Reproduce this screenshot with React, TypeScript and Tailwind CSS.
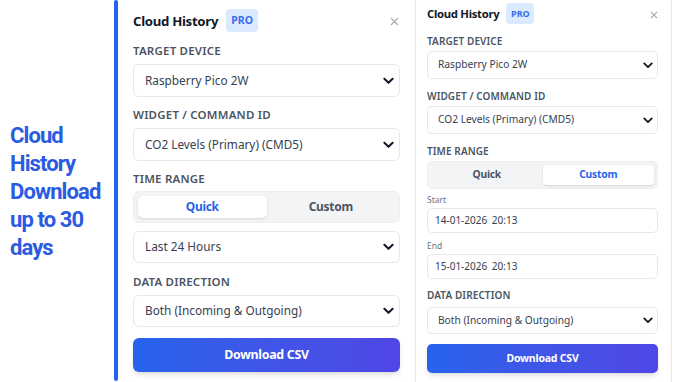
import React from "react";

const Chevron = ({ w, h, sw }: { w: number; h: number; sw: number }) => (
  <svg width={w} height={h} viewBox="0 0 12 8" fill="none">
    <path d="M1.5 1.5 L6 6 L10.5 1.5" stroke="#111827" strokeWidth={sw} strokeLinecap="round" strokeLinejoin="round" />
  </svg>
);

const XIcon = ({ s }: { s: number }) => (
  <svg width={s} height={s} viewBox="0 0 10 10" fill="none">
    <path d="M1.5 1.5 L8.5 8.5 M8.5 1.5 L1.5 8.5" stroke="#9ca3af" strokeWidth={1.3} strokeLinecap="round" />
  </svg>
);

export default function App() {
  const font = { fontFamily: '"Noto Sans", "Open Sans", sans-serif' };
  return (
    <div className="w-[680px] h-[382px] bg-white flex overflow-hidden" style={font}>
      {/* Left caption */}
      <div className="w-[114px] shrink-0 pl-[10px] flex items-center">
        <div
          className="text-[#2b5be3] font-bold text-[22px] leading-[28px] tracking-[-0.9px] pt-[2px]"
          style={{ fontFamily: 'Roboto, "Liberation Sans", sans-serif' }}
        >
          Cloud
          <br />
          History
          <br />
          Download
          <br />
          up to 30
          <br />
          days
        </div>
      </div>
      {/* Blue bar */}
      <div className="w-[4px] shrink-0 h-[381px] bg-[#2563eb] rounded-full" />

      {/* Large panel */}
      <div className="w-[297px] shrink-0 pl-[15px] pr-[15px] pt-[9px] flex flex-col">
        <div className="h-[23px] flex items-center justify-between">
          <div className="flex items-center">
            <span className="pt-[3px] text-[13.2px] font-bold tracking-[-0.3px] text-[#111827]">Cloud History</span>
            <span className="ml-[8px] w-[32px] h-[23px] rounded-[4px] bg-[#dbeafe] text-[#3b6cf0] text-[10.5px] font-bold flex items-center justify-center">
              PRO
            </span>
          </div>
          <div className="mr-[1px] pt-[2px]">
            <XIcon s={9} />
          </div>
        </div>

        <div className="mt-[11px] h-[16px] leading-[16px] text-[11.5px] font-semibold tracking-[0.2px] text-[#4b5563]">TARGET DEVICE</div>
        <div className="mt-[5px] h-[33px] border border-[#e5e7eb] rounded-[6px] flex items-center justify-between pl-[11px] pr-[5px] text-[11.8px] text-[#374151]">
          <span>Raspberry Pico 2W</span>
          <Chevron w={11} h={8} sw={2.2} />
        </div>

        <div className="mt-[10px] h-[16px] leading-[16px] text-[11.5px] font-semibold tracking-[0.2px] text-[#4b5563]">WIDGET / COMMAND ID</div>
        <div className="mt-[5px] h-[33px] border border-[#e5e7eb] rounded-[6px] flex items-center justify-between pl-[11px] pr-[5px] text-[11.8px] text-[#374151]">
          <span>CO2 Levels (Primary) (CMD5)</span>
          <Chevron w={11} h={8} sw={2.2} />
        </div>

        <div className="mt-[10px] h-[16px] leading-[16px] text-[11.5px] font-semibold tracking-[0.2px] text-[#4b5563]">TIME RANGE</div>
        <div className="mt-[4px] h-[32px] bg-[#f3f4f6] rounded-[6px] border border-[#eceef1] p-[4px] flex">
          <div className="flex-1 bg-white rounded-[5px] shadow-sm flex items-center justify-center text-[12px] tracking-[-0.3px] font-bold text-[#2563eb]">Quick</div>
          <div className="flex-1 flex items-center justify-center text-[12px] tracking-[-0.3px] font-bold text-[#4b5563]">Custom</div>
        </div>

        <div className="mt-[8px] h-[32px] border border-[#e5e7eb] rounded-[6px] flex items-center justify-between pl-[11px] pr-[5px] text-[11.8px] text-[#374151]">
          <span>Last 24 Hours</span>
          <Chevron w={11} h={8} sw={2.2} />
        </div>

        <div className="mt-[11px] h-[16px] leading-[16px] text-[11.5px] font-semibold tracking-[0.2px] text-[#4b5563]">DATA DIRECTION</div>
        <div className="mt-[5px] h-[32px] border border-[#e5e7eb] rounded-[6px] flex items-center justify-between pl-[11px] pr-[5px] text-[11.8px] text-[#374151]">
          <span>Both (Incoming &amp; Outgoing)</span>
          <Chevron w={11} h={8} sw={2.2} />
        </div>

        <div className="mt-[11px] h-[34px] rounded-[6px] bg-gradient-to-r from-[#2563eb] to-[#4f46e5] shadow-md flex items-center justify-center text-white text-[12.4px] tracking-[-0.3px] font-bold">
          Download CSV
        </div>
      </div>

      {/* Small panel */}
      <div className="w-[257px] shrink-0 h-full border-l border-r border-[#e5e7eb] pl-[11px] pr-[13px] pt-[3px] flex flex-col">
        <div className="h-[21px] flex items-center justify-between">
          <div className="flex items-center">
            <span className="pt-[2px] text-[11.3px] font-bold tracking-[-0.3px] text-[#111827]">Cloud History</span>
            <span className="ml-[7px] w-[28px] h-[21px] rounded-[4px] bg-[#dbeafe] text-[#3b6cf0] text-[9px] font-bold flex items-center justify-center">
              PRO
            </span>
          </div>
          <div className="mr-[0px] pt-[2px]">
            <XIcon s={8} />
          </div>
        </div>

        <div className="mt-[10px] h-[14px] leading-[14px] text-[10px] font-semibold tracking-[0.1px] text-[#4b5563]">TARGET DEVICE</div>
        <div className="mt-[3px] h-[28px] border border-[#e5e7eb] rounded-[5px] flex items-center justify-between pl-[10px] pr-[4px] text-[10.2px] text-[#374151]">
          <span>Raspberry Pico 2W</span>
          <Chevron w={10} h={7} sw={2.2} />
        </div>

        <div className="mt-[10px] h-[14px] leading-[14px] text-[10px] font-semibold tracking-[0.1px] text-[#4b5563]">WIDGET / COMMAND ID</div>
        <div className="mt-[3px] h-[28px] border border-[#e5e7eb] rounded-[5px] flex items-center justify-between pl-[10px] pr-[4px] text-[10.2px] text-[#374151]">
          <span>CO2 Levels (Primary) (CMD5)</span>
          <Chevron w={10} h={7} sw={2.2} />
        </div>

        <div className="mt-[10px] h-[14px] leading-[14px] text-[10px] font-semibold tracking-[0.1px] text-[#4b5563]">TIME RANGE</div>
        <div className="mt-[3px] h-[28px] bg-[#f3f4f6] rounded-[5px] border border-[#eceef1] p-[3px] flex">
          <div className="flex-1 flex items-center justify-center text-[10.3px] tracking-[-0.2px] font-bold text-[#4b5563]">Quick</div>
          <div className="flex-1 bg-white rounded-[4px] shadow-sm flex items-center justify-center text-[10.3px] tracking-[-0.2px] font-bold text-[#2563eb]">Custom</div>
        </div>

        <div className="mt-[5px] h-[12px] leading-[12px] text-[8.5px] text-[#6b7280]">Start</div>
        <div className="mt-[2px] h-[25px] border border-[#e5e7eb] rounded-[5px] flex items-center pl-[7px] text-[10px] text-[#374151]">
          <span style={{ wordSpacing: "2px" }}>14-01-2026 20:13</span>
        </div>

        <div className="mt-[7px] h-[12px] leading-[12px] text-[8.5px] text-[#6b7280]">End</div>
        <div className="mt-[2px] h-[25px] border border-[#e5e7eb] rounded-[5px] flex items-center pl-[7px] text-[10px] text-[#374151]">
          <span style={{ wordSpacing: "2px" }}>15-01-2026 20:13</span>
        </div>

        <div className="mt-[9px] h-[14px] leading-[14px] text-[10px] font-semibold tracking-[0.1px] text-[#4b5563]">DATA DIRECTION</div>
        <div className="mt-[5px] h-[27px] border border-[#e5e7eb] rounded-[5px] flex items-center justify-between pl-[10px] pr-[4px] text-[10.2px] text-[#374151]">
          <span>Both (Incoming &amp; Outgoing)</span>
          <Chevron w={10} h={7} sw={2.2} />
        </div>

        <div className="mt-[10px] h-[29px] rounded-[5px] bg-gradient-to-r from-[#2563eb] to-[#4f46e5] shadow-md flex items-center justify-center text-white text-[10.5px] tracking-[-0.2px] font-bold">
          Download CSV
        </div>
      </div>
    </div>
  );
}
